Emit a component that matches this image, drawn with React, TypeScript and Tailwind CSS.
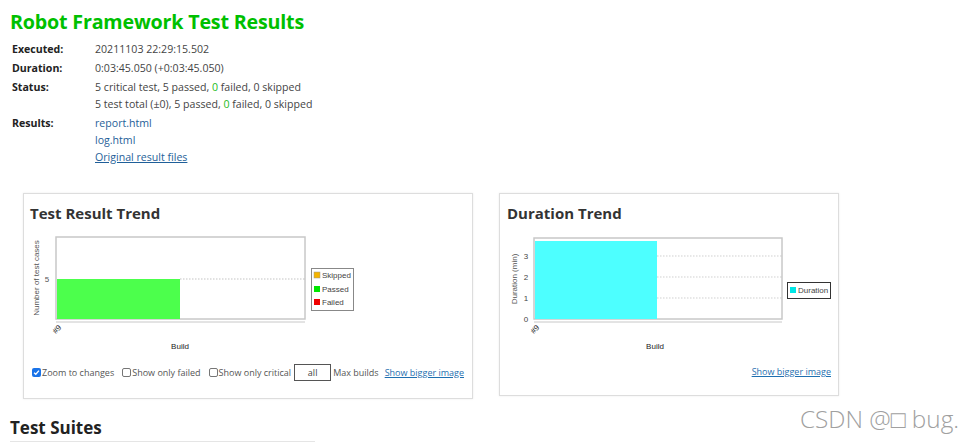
import React from 'react';

const FONT = { fontFamily: '"Open Sans", "Noto Sans", sans-serif' };
const CHART_FONT = '"Liberation Sans", Arial, sans-serif';

function InfoRow({ label, children }: { label: string; children: React.ReactNode }) {
  return (
    <div className="flex">
      <div className="w-[83px] shrink-0 font-bold text-[#222]">{label}</div>
      <div className="flex flex-col gap-[1px] text-[#444]">{children}</div>
    </div>
  );
}

function Check({ label, checked }: { label: string; checked?: boolean }) {
  return (
    <label className="flex items-center gap-[1px] whitespace-nowrap shrink-0">
      {checked ? (
        <span className="w-[9px] h-[9px] rounded-[2px] bg-[#1a73e8] flex items-center justify-center">
          <svg width="7" height="7" viewBox="0 0 8 8">
            <path d="M1.2 4.2 L3.2 6 L6.8 1.8" stroke="white" strokeWidth="1.5" fill="none" />
          </svg>
        </span>
      ) : (
        <span className="w-[9px] h-[9px] rounded-[2px] border border-[#767676] bg-white" />
      )}
      <span>{label}</span>
    </label>
  );
}

function ResultChart() {
  return (
    <svg width="330" height="122" style={{ fontFamily: CHART_FONT }}>
      <rect x="26" y="5" width="249" height="82" fill="white" stroke="#c8c8c8" strokeWidth="1.5" />
      <line x1="26" y1="90" x2="275" y2="90" stroke="#c8c8c8" strokeWidth="1" />
      <rect x="27" y="47" width="123" height="40" fill="#4cff4c" />
      <line x1="150" y1="47" x2="275" y2="47" stroke="#aaa" strokeWidth="0.7" strokeDasharray="1.5 1.5" />
      <text x="17" y="50" fontSize="8" fill="#555" textAnchor="middle">5</text>
      <text x="0" y="0" fontSize="8" fill="#555" textAnchor="middle" transform="translate(9 46) rotate(-90)">
        Number of test cases
      </text>
      <text x="0" y="0" fontSize="8" fill="#333" textAnchor="end" transform="translate(32 96) rotate(-45)">#9</text>
      <text x="150" y="117" fontSize="8" fill="#222" textAnchor="middle">Build</text>
      <rect x="281.5" y="36.5" width="42" height="42" fill="white" stroke="#888" />
      <rect x="284" y="40" width="6" height="6" fill="#f5b400" stroke="#999" strokeWidth="0.5" />
      <text x="292" y="46" fontSize="8" fill="#444">Skipped</text>
      <rect x="284" y="54" width="6" height="6" fill="#00e600" />
      <text x="292" y="60" fontSize="8" fill="#444">Passed</text>
      <rect x="284" y="67" width="6" height="6" fill="#f00000" />
      <text x="292" y="73" fontSize="8" fill="#444">Failed</text>
    </svg>
  );
}

function DurationChart() {
  return (
    <svg width="330" height="122" style={{ fontFamily: CHART_FONT }}>
      <rect x="27" y="6" width="248" height="81" fill="white" stroke="#c8c8c8" strokeWidth="1.5" />
      <line x1="27" y1="90" x2="275" y2="90" stroke="#c8c8c8" strokeWidth="1" />
      {[24, 45, 66].map((y) => (
        <line key={y} x1="150" y1={y} x2="275" y2={y} stroke="#bbb" strokeWidth="0.7" strokeDasharray="1.5 1.5" />
      ))}
      <rect x="28" y="9" width="122" height="78" fill="#4dffff" />
      {[
        ['3', 27],
        ['2', 48],
        ['1', 69],
        ['0', 90],
      ].map(([t, y]) => (
        <text key={t} x="19" y={y as number} fontSize="8" fill="#444" textAnchor="middle">
          {t}
        </text>
      ))}
      <text x="0" y="0" fontSize="8" fill="#555" textAnchor="middle" transform="translate(10 47) rotate(-90)">
        Duration (min)
      </text>
      <text x="0" y="0" fontSize="8" fill="#333" textAnchor="end" transform="translate(33 96) rotate(-45)">#9</text>
      <text x="148" y="117" fontSize="8" fill="#222" textAnchor="middle">Build</text>
      <rect x="280.5" y="50.5" width="43" height="16" fill="white" stroke="#333" />
      <rect x="283" y="55" width="6" height="6" fill="#00e6e6" />
      <text x="291" y="61" fontSize="8" fill="#444">Duration</text>
    </svg>
  );
}

export default function App() {
  return (
    <div className="w-[974px] h-[443px] overflow-hidden bg-white relative pl-[10px] pt-[8px]" style={FONT}>
      <h1 className="text-[19.7px] leading-[28px] font-bold text-[#00c000] tracking-[-0.2px]">
        Robot Framework Test Results
      </h1>

      <div className="mt-[5px] pl-[2px] flex flex-col gap-[3px] text-[10.6px] leading-[16px]">
        <InfoRow label="Executed:">
          <span>20211103 22:29:15.502</span>
        </InfoRow>
        <InfoRow label="Duration:">
          <span>0:03:45.050 (+0:03:45.050)</span>
        </InfoRow>
        <InfoRow label="Status:">
          <span>
            5 critical test, 5 passed, <span className="text-[#22bb22]">0</span> failed, 0 skipped
          </span>
          <span>
            5 test total (±0), 5 passed, <span className="text-[#22bb22]">0</span> failed, 0 skipped
          </span>
        </InfoRow>
        <InfoRow label="Results:">
          <span className="text-[#1f5f99]">report.html</span>
          <span className="text-[#1f5f99]">log.html</span>
          <span className="text-[#1f5f99] underline">Original result files</span>
        </InfoRow>
      </div>

      <div className="mt-[28px] ml-[13px] flex items-start gap-[26px]">
        <div className="w-[450px] h-[206px] border border-[#ddd] shadow-[0_0_2px_rgba(0,0,0,0.08)] pl-[8px] pr-[6px] pt-[9px]">
          <h2 className="text-[15px] leading-[20px] font-bold text-[#333] -ml-[2px]">Test Result Trend</h2>
          <div className="mt-[9px] -ml-[2px]">
            <ResultChart />
          </div>
          <div className="mt-[10px] flex items-center text-[9px] text-[#555] leading-[16px] whitespace-nowrap">
            <Check label="Zoom to changes" checked />
            <span className="w-[8px] shrink-0" />
            <Check label="Show only failed" />
            <span className="w-[8px] shrink-0" />
            <Check label="Show only critical" />
            <span className="w-[3px] shrink-0" />
            <span className="w-[37px] h-[17px] shrink-0 border-[1.5px] border-[#555] flex items-center justify-center text-[#444]">
              all
            </span>
            <span className="ml-[2px]">Max builds</span>
            <span className="ml-[6px] text-[#1f6fb0] underline">Show bigger image</span>
          </div>
        </div>

        <div className="w-[340px] h-[203px] border border-[#ddd] shadow-[0_0_2px_rgba(0,0,0,0.08)] px-[7px] pt-[9px]">
          <h2 className="text-[15px] leading-[20px] font-bold text-[#333]">Duration Trend</h2>
          <div className="mt-[9px]">
            <DurationChart />
          </div>
          <div className="mt-[10px] flex justify-end text-[9px] leading-[16px] whitespace-nowrap">
            <span className="text-[#1f6fb0] underline">Show bigger image</span>
          </div>
        </div>
      </div>

      <div className="mt-[17px]">
        <h2 className="text-[17px] leading-[24px] font-bold text-[#222]">Test Suites</h2>
        <div className="w-[305px] h-px bg-[#e5e5e5] mt-[1px]" />
      </div>

      <div className="absolute left-[800px] top-[404px] text-[24.3px] leading-[30px] text-[#a0a0a0] font-light">
        CSDN @□ bug.
      </div>
    </div>
  );
}
